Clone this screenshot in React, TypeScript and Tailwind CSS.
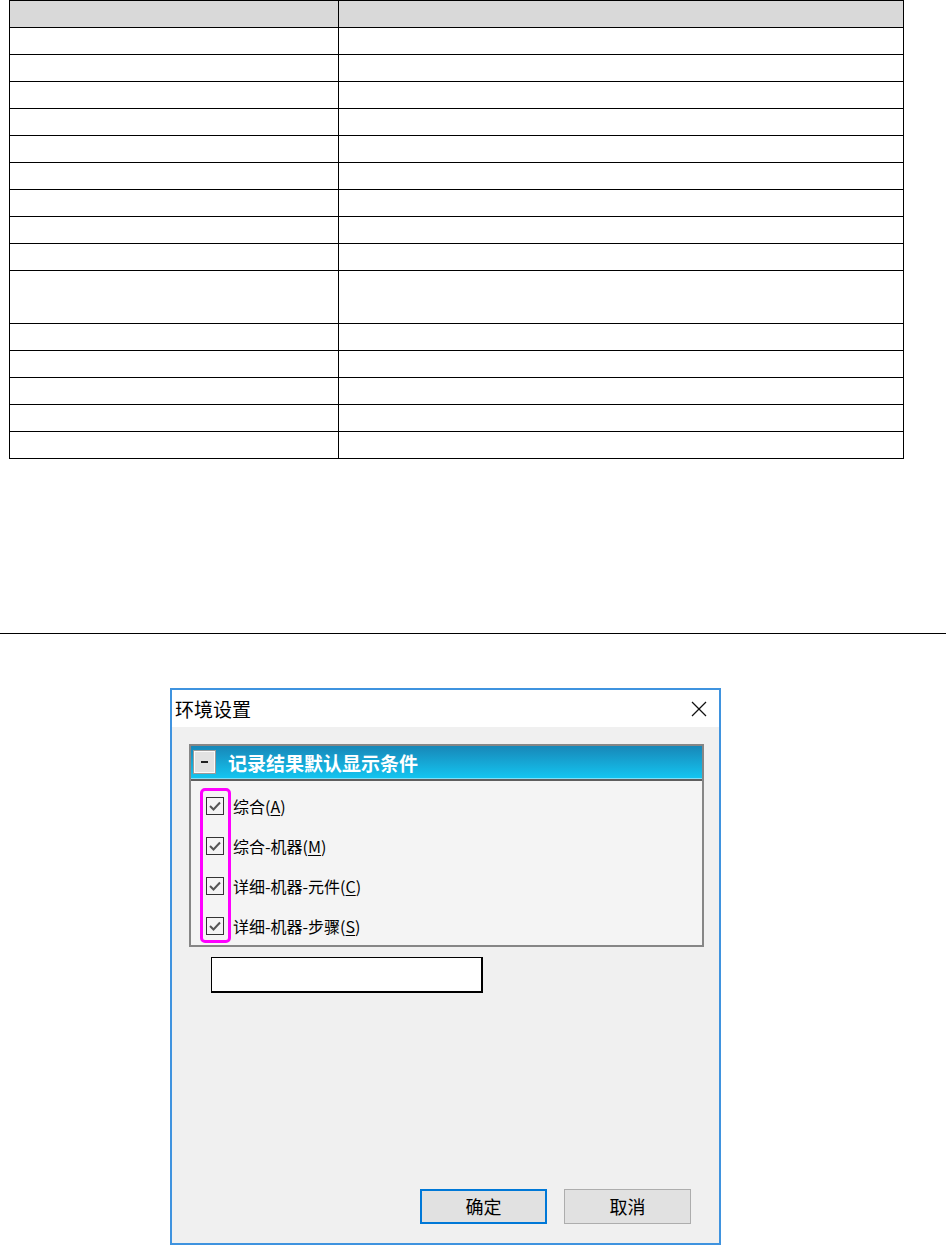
import React from "react";

const cjk = "font-['Microsoft_YaHei','Noto_Sans_CJK_SC',sans-serif]";

function Check() {
  return (
    <div className="w-[18px] h-[18px] border border-[#333333] bg-[#f4f4f4] flex items-center justify-center shrink-0">
      <svg width="14" height="14" viewBox="0 0 14 14">
        <polyline points="2,7 5.5,10.5 12,3.5" fill="none" stroke="#555555" strokeWidth="2" />
      </svg>
    </div>
  );
}

function Item({ label, k }: { label: string; k: string }) {
  return (
    <div className="h-[40px] flex items-center gap-[9px]">
      <Check />
      <span className="text-[16px] leading-none text-black">
        {label}(<span className="underline underline-offset-2">{k}</span>)
      </span>
    </div>
  );
}

export default function App() {
  const rows = [0, 1, 2, 3, 4, 5, 6, 7, 8, 9, 10, 11, 12, 13, 14];
  return (
    <div className={`bg-white w-[946px] h-[1246px] overflow-hidden ${cjk}`}>
      <div className="ml-[9px] w-[895px] border-l border-t border-black">
        <div className="grid grid-cols-[329px_565px] h-[27px] bg-[#d9d9d9]">
          <div className="border-r border-b border-black" />
          <div className="border-r border-b border-black" />
        </div>
        {rows.map((i) => (
          <div key={i} className={`grid grid-cols-[329px_565px] ${i === 9 ? "h-[53px]" : "h-[27px]"}`}>
            <div className="border-r border-b border-black" />
            <div className="border-r border-b border-black" />
          </div>
        ))}
      </div>

      <div className="mt-[174px] h-px w-full bg-black" />

      <div className="mt-[54px] ml-[170px] w-[551px] h-[557px] border-2 border-[#3f93df] flex flex-col">
        <div className="h-[37px] bg-white flex items-center justify-between pl-[3px] pr-[12px]">
          <span className="text-[19px] text-black leading-none">环境设置</span>
          <svg width="16" height="16" viewBox="0 0 16 16">
            <line x1="1" y1="1" x2="15" y2="15" stroke="#111" strokeWidth="1.2" />
            <line x1="15" y1="1" x2="1" y2="15" stroke="#111" strokeWidth="1.2" />
          </svg>
        </div>
        <div className="flex-1 bg-[#f0f0f0] pt-[17px] pl-[17px] flex flex-col">
          <div className="relative w-[515px] h-[203px] border-2 border-[#868686] bg-[#f4f4f4]">
            <div className="h-[32px] bg-gradient-to-b from-[#1787b8] to-[#13c5f0] flex items-center pl-[3px]">
              <div className="w-[21px] h-[22px] bg-[#e2e2e2] border border-[#fafafa] outline outline-1 outline-[#9a9a9a] flex items-center justify-center">
                <div className="w-[7px] h-[2px] bg-[#222]" />
              </div>
              <span className="ml-[13px] text-[19px] font-bold text-white leading-none">记录结果默认显示条件</span>
            </div>
            <div className="h-px bg-[#7fdff7]" />
            <div className="h-[2px] bg-[#5e5e5e]" />
            <div className="pt-[5px] pl-[15px]">
              <Item label="综合" k="A" />
              <Item label="综合-机器" k="M" />
              <Item label="详细-机器-元件" k="C" />
              <Item label="详细-机器-步骤" k="S" />
            </div>
            <div className="absolute left-[9px] top-[42px] w-[31px] h-[155px] border-[3px] border-[#ff00ff] rounded-[5px]" />
          </div>
          <div className="mt-[10px] ml-[22px] w-[272px] h-[36px] bg-white border border-black border-r-2 border-b-2" />
          <div className="flex-1" />
          <div className="flex justify-end gap-[17px] pb-[19px] pr-[28px]">
            <div className="w-[127px] h-[35px] border-2 border-[#0078d7] bg-[#e1e1e1] flex items-center justify-center text-[18px] text-black">
              确定
            </div>
            <div className="w-[127px] h-[35px] border border-[#adadad] bg-[#e1e1e1] flex items-center justify-center text-[18px] text-black">
              取消
            </div>
          </div>
        </div>
      </div>
    </div>
  );
}
